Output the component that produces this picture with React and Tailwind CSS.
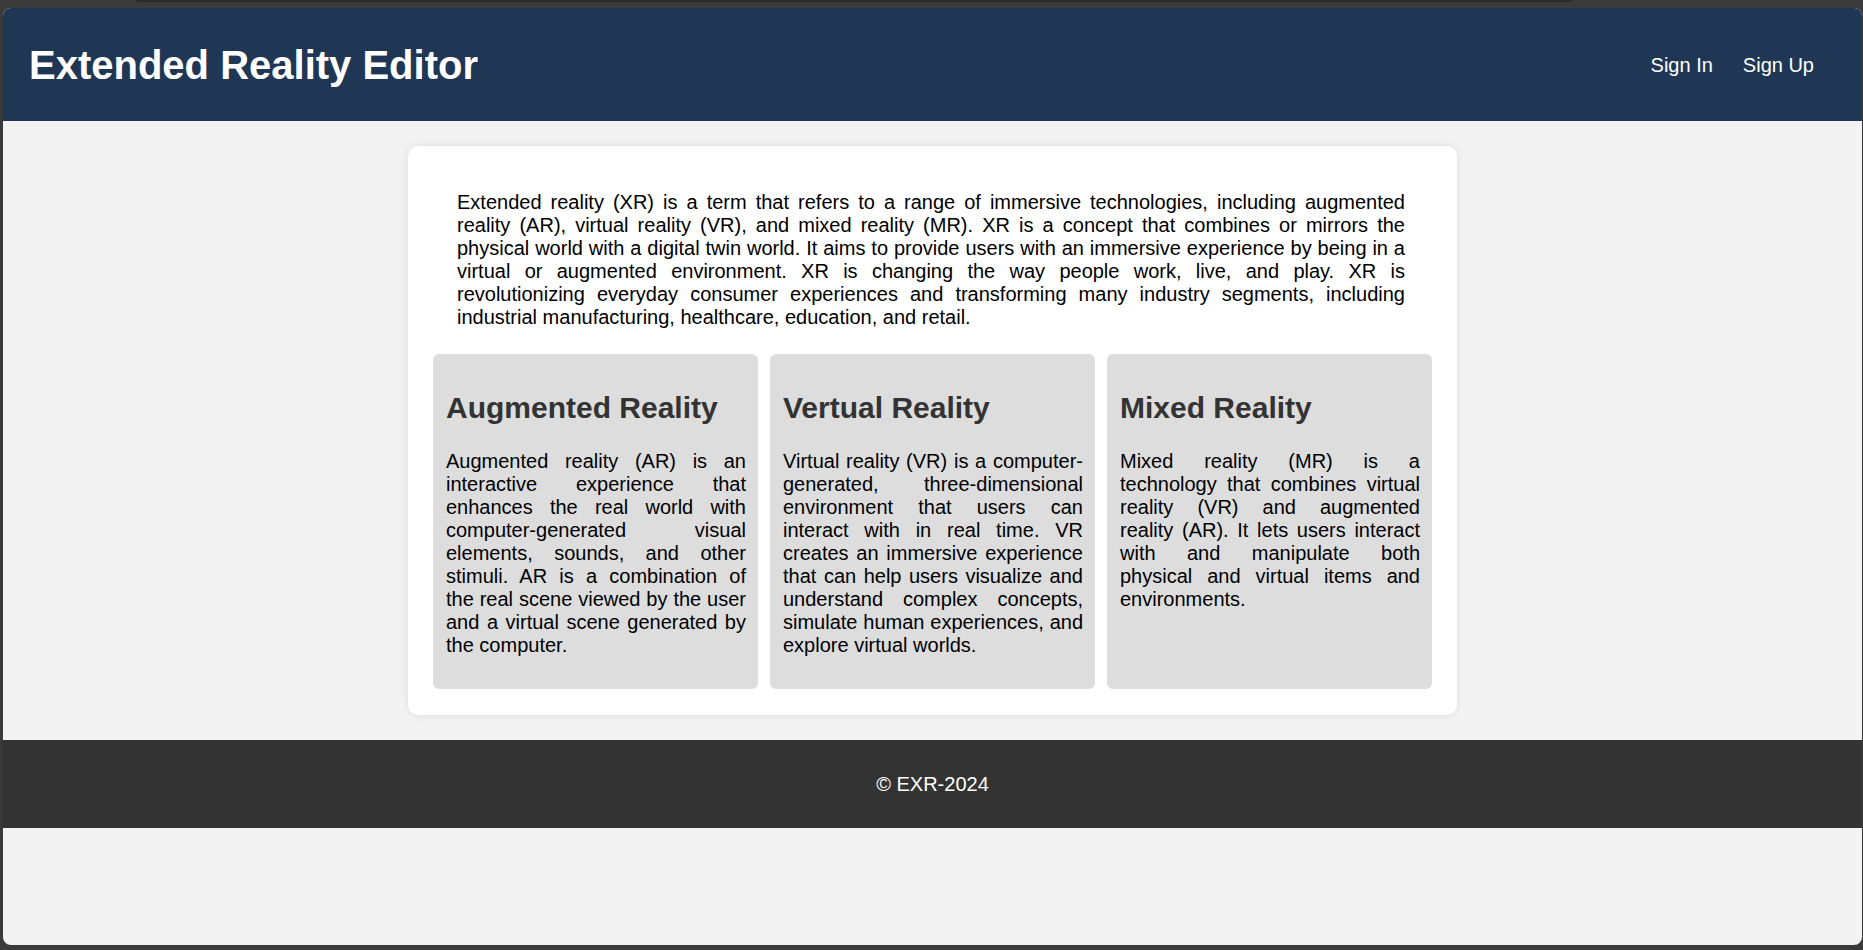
import React from 'react';

const sections = [
  {
    title: 'Augmented Reality',
    text: 'Augmented reality (AR) is an interactive experience that enhances the real world with computer-generated visual elements, sounds, and other stimuli. AR is a combination of the real scene viewed by the user and a virtual scene generated by the computer.',
  },
  {
    title: 'Vertual Reality',
    text: 'Virtual reality (VR) is a computer-generated, three-dimensional environment that users can interact with in real time. VR creates an immersive experience that can help users visualize and understand complex concepts, simulate human experiences, and explore virtual worlds.',
  },
  {
    title: 'Mixed Reality',
    text: 'Mixed reality (MR) is a technology that combines virtual reality (VR) and augmented reality (AR). It lets users interact with and manipulate both physical and virtual items and environments.',
  },
];

const App = () => {
  return (
    <div className="w-full h-[950px] bg-[#3a3a3a] flex flex-col pl-[3px] pr-[1px] pb-[5px] font-['Liberation_Sans',Arial,sans-serif]">
      {/* window top strip */}
      <div className="h-[8px] shrink-0">
        <div className="ml-[133px] w-[1437px] h-[2px] bg-[#2a2a2a] rounded-b-[3px]"></div>
      </div>

      <div className="flex-1 flex flex-col bg-[#f3f3f3] rounded-[8px] overflow-hidden">
        {/* Header */}
        <header className="h-[113px] shrink-0 bg-[#1f3655] flex items-center justify-between pl-[26px] pr-[48px]">
          <h1 className="text-white text-[40px] font-bold leading-none">Extended Reality Editor</h1>
          <nav className="flex items-center gap-[30px] text-white text-[20px]">
            <a href="#">Sign In</a>
            <a href="#">Sign Up</a>
          </nav>
        </header>

        {/* Main */}
        <main className="flex justify-center py-[25px]">
          <div className="w-[1049px] bg-white rounded-[10px] px-[25px] pt-[25px] pb-[26px] shadow-[0_0_10px_rgba(0,0,0,0.1)]">
            <p className="mt-[20px] mb-[25px] ml-[24px] mr-[27px] text-[20px] leading-[23px] text-black text-justify">
              Extended reality (XR) is a term that refers to a range of immersive technologies, including augmented reality (AR), virtual reality (VR), and mixed reality (MR). XR is a concept that combines or mirrors the physical world with a digital twin world. It aims to provide users with an immersive experience by being in a virtual or augmented environment. XR is changing the way people work, live, and play. XR is revolutionizing everyday consumer experiences and transforming many industry segments, including industrial manufacturing, healthcare, education, and retail.
            </p>

            <div className="grid grid-cols-3 gap-[12px]">
              {sections.map((s) => (
                <div key={s.title} className="bg-[#dddddd] rounded-[6px] pl-[13px] pr-[12px] pt-[13px] pb-[32px]">
                  <h2 className="mt-[24px] mb-[25px] text-[30px] leading-[34px] font-bold text-[#333333]">{s.title}</h2>
                  <p className="text-[20px] leading-[23px] text-black text-justify">{s.text}</p>
                </div>
              ))}
            </div>
          </div>
        </main>

        {/* Footer */}
        <footer className="h-[88px] shrink-0 bg-[#333333] flex items-center justify-center">
          <p className="text-white text-[20px]">© EXR-2024</p>
        </footer>
      </div>
    </div>
  );
};

export default App;
